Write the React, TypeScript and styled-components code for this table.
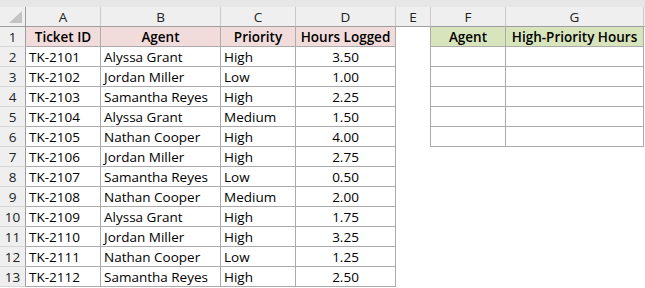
import React from 'react'
import styled, { createGlobalStyle, css } from 'styled-components'

const GlobalStyle = createGlobalStyle`
  html, body {
    margin: 0;
    padding: 0;
    background: #ffffff;
  }
  body {
    font-family: "Open Sans", Lato, sans-serif;
    color: #000000;
  }
`

const LINE = '#ababab'
const HEAD_LINE = '#9e9e9e'
const HEAD_BG = '#efefef'
const STRIP_BG = '#e6e6e6'

const columns = ['A', 'B', 'C', 'D', 'E', 'F', 'G', '']

const tickets = [
  ['TK-2101', 'Alyssa Grant', 'High', '3.50'],
  ['TK-2102', 'Jordan Miller', 'Low', '1.00'],
  ['TK-2103', 'Samantha Reyes', 'High', '2.25'],
  ['TK-2104', 'Alyssa Grant', 'Medium', '1.50'],
  ['TK-2105', 'Nathan Cooper', 'High', '4.00'],
  ['TK-2106', 'Jordan Miller', 'High', '2.75'],
  ['TK-2107', 'Samantha Reyes', 'Low', '0.50'],
  ['TK-2108', 'Nathan Cooper', 'Medium', '2.00'],
  ['TK-2109', 'Alyssa Grant', 'High', '1.75'],
  ['TK-2110', 'Jordan Miller', 'High', '3.25'],
  ['TK-2111', 'Nathan Cooper', 'Low', '1.25'],
  ['TK-2112', 'Samantha Reyes', 'High', '2.50'],
]

export default function App () {
  return (
    <>
      <GlobalStyle />
      <Sheet>
        <TopStrip />
        <Corner>
          <CornerMark />
        </Corner>
        {columns.map((col, i) => (
          <ColHead key={i} $last={col === ''}>{col}</ColHead>
        ))}

        {/* header row */}
        <RowHead>1</RowHead>
        <Cell $bg='#f2dcdb' $bold $align='center' $border>Ticket ID</Cell>
        <Cell $bg='#f2dcdb' $bold $align='center' $border>Agent</Cell>
        <Cell $bg='#f2dcdb' $bold $align='center' $border>Priority</Cell>
        <Cell $bg='#f2dcdb' $bold $align='center' $border>Hours Logged</Cell>
        <Cell $right />
        <Cell $bg='#d8e4bc' $bold $align='center' $border>Agent</Cell>
        <Cell $bg='#d8e4bc' $bold $align='center' $border>High-Priority Hours</Cell>
        <Cell />

        {tickets.map((row, r) => {
          const summary = r < 5
          return (
            <React.Fragment key={row[0]}>
              <RowHead>{r + 2}</RowHead>
              <Cell $border>{row[0]}</Cell>
              <Cell $border>{row[1]}</Cell>
              <Cell $border>{row[2]}</Cell>
              <Cell $border $align='center'>{row[3]}</Cell>
              <Cell $right={summary} />
              <Cell $border={summary} />
              <Cell $border={summary} />
              <Cell />
            </React.Fragment>
          )
        })}
      </Sheet>
    </>
  )
}

const Sheet = styled.div`
  display: grid;
  grid-template-columns: 26px 75px 120px 75px 100px 35px 75px 138px 1fr;
  grid-template-rows: 7px repeat(14, 20px);
  width: 645px;
  height: 288px;
  overflow: hidden;
  font-size: 13.5px;
`

const TopStrip = styled.div`
  grid-column: 1 / -1;
  background: ${STRIP_BG};
`

const Corner = styled.div`
  position: relative;
  background: ${HEAD_BG};
  border-right: 1px solid ${HEAD_LINE};
  border-bottom: 1px solid ${HEAD_LINE};
`

const CornerMark = styled.div`
  position: absolute;
  right: 3px;
  bottom: 3px;
  width: 0;
  height: 0;
  border-left: 13px solid transparent;
  border-bottom: 12px solid #c3c3c3;
`

const ColHead = styled.div<{ $last?: boolean }>`
  display: flex;
  align-items: center;
  justify-content: center;
  background: ${HEAD_BG};
  color: #222222;
  border-right: ${p => (p.$last ? 'none' : `1px solid #c8c8c8`)};
  border-bottom: 1px solid ${HEAD_LINE};
  box-sizing: border-box;
  padding-top: 1px;
`

const RowHead = styled.div`
  display: flex;
  align-items: center;
  justify-content: center;
  background: ${HEAD_BG};
  color: #222222;
  border-right: 1px solid ${HEAD_LINE};
  border-bottom: 1px solid #d6d6d6;
  box-sizing: border-box;
`

const Cell = styled.div<{
  $bg?: string
  $bold?: boolean
  $align?: 'left' | 'center'
  $border?: boolean
  $right?: boolean
}>`
  display: flex;
  align-items: center;
  justify-content: ${p => (p.$align === 'center' ? 'center' : 'flex-start')};
  padding: 1px 3px 0;
  box-sizing: border-box;
  white-space: nowrap;
  overflow: hidden;
  background: ${p => p.$bg || '#ffffff'};
  font-weight: ${p => (p.$bold ? 600 : 400)};
  ${p =>
    p.$border &&
    css`
      border-right: 1px solid ${LINE};
      border-bottom: 1px solid ${LINE};
    `}
  ${p =>
    p.$right &&
    css`
      border-right: 1px solid ${LINE};
    `}
`
